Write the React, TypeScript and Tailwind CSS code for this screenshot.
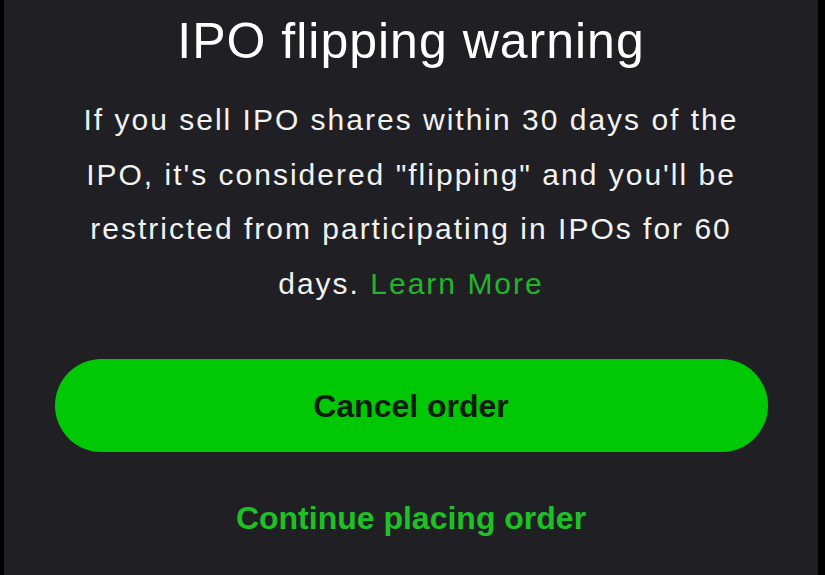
export default function App() {
  return (
    <div className="flex h-[575px] w-[825px] bg-black">
      <div
        className="ml-[4px] mr-[7px] flex h-full flex-1 flex-col items-center bg-[#202024] text-white"
        style={{ fontFamily: '"Liberation Sans", Arial, sans-serif' }}
      >
        <h1 className="mt-[12px] text-[50px] leading-[58px] tracking-[1px]">IPO flipping warning</h1>
        <p className="mt-[23px] w-[700px] text-center text-[30px] leading-[54.5px] tracking-[2px] text-[#f2f2f2]">
          If you sell IPO shares within 30 days of the IPO, it's considered "flipping" and you'll be
          restricted from participating in IPOs for 60 days.{' '}
          <span className="text-[#22b52b]">Learn More</span>
        </p>
        <button className="mt-[48px] h-[93px] w-[713px] rounded-full bg-[#00c805] text-[32px] font-bold text-[#0b1e0b]">
          Cancel order
        </button>
        <button className="mt-[46px] text-[32px] font-bold leading-[40px] text-[#1ec125]">
          Continue placing order
        </button>
      </div>
    </div>
  );
}
